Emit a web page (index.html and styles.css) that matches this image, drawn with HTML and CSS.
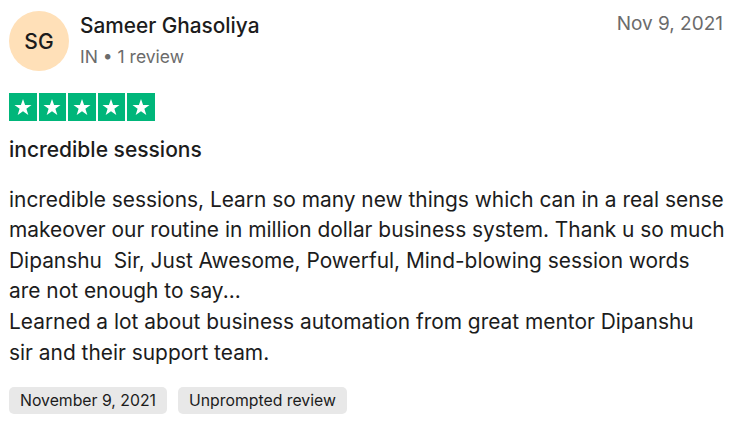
FILE: index.html
```html
<!DOCTYPE html>
<html>
<head>
<meta charset="utf-8">
<link rel="stylesheet" href="styles.css">
</head>
<body>
<article class="review">
  <header class="head">
    <div class="avatar">SG</div>
    <div class="who">
      <div class="name">Sameer Ghasoliya</div>
      <div class="meta">IN • 1 review</div>
    </div>
    <time class="date">Nov 9, 2021</time>
  </header>
  <div class="stars">
    <span class="star"><svg viewBox="0 0 24 24"><path d="M12 3.2l2.3 6.6h7l-5.6 4.1 2.1 6.7L12 16.5l-5.8 4.1 2.1-6.7-5.6-4.1h7z"/></svg></span>
    <span class="star"><svg viewBox="0 0 24 24"><path d="M12 3.2l2.3 6.6h7l-5.6 4.1 2.1 6.7L12 16.5l-5.8 4.1 2.1-6.7-5.6-4.1h7z"/></svg></span>
    <span class="star"><svg viewBox="0 0 24 24"><path d="M12 3.2l2.3 6.6h7l-5.6 4.1 2.1 6.7L12 16.5l-5.8 4.1 2.1-6.7-5.6-4.1h7z"/></svg></span>
    <span class="star"><svg viewBox="0 0 24 24"><path d="M12 3.2l2.3 6.6h7l-5.6 4.1 2.1 6.7L12 16.5l-5.8 4.1 2.1-6.7-5.6-4.1h7z"/></svg></span>
    <span class="star"><svg viewBox="0 0 24 24"><path d="M12 3.2l2.3 6.6h7l-5.6 4.1 2.1 6.7L12 16.5l-5.8 4.1 2.1-6.7-5.6-4.1h7z"/></svg></span>
  </div>
  <h2 class="title">incredible sessions</h2>
  <p class="body">incredible sessions, Learn so many new things which can in a real sense<br>makeover our routine in million dollar business system. Thank u so much<br>Dipanshu&nbsp; Sir, Just Awesome, Powerful, Mind-blowing session words<br>are not enough to say...<br>Learned a lot about business automation from great mentor Dipanshu<br>sir and their support team.</p>
  <div class="chips">
    <span class="chip">November 9, 2021</span>
    <span class="chip">Unprompted review</span>
  </div>
</article>
</body>
</html>
```
FILE: styles.css
```css
html, body {
  margin: 0;
  padding: 0;
  background: #fff;
}
body {
  font-family: Inter, "Noto Sans", sans-serif;
  color: #1c1c1c;
}
.review {
  padding: 11px 0 0 9px;
}
.head {
  display: flex;
  align-items: flex-start;
  padding-right: 7px;
}
.avatar {
  width: 60px;
  height: 60px;
  border-radius: 50%;
  background: #ffe0b8;
  display: flex;
  align-items: center;
  justify-content: center;
  font-size: 21px;
  font-weight: 500;
  color: #1c1c1c;
  flex: none;
}
.who {
  margin-left: 11px;
  flex: 1;
}
.name {
  font-size: 20.8px;
  font-weight: 500;
  line-height: 26px;
  margin-top: 2px;
}
.meta {
  font-size: 17.5px;
  color: #6b6b6b;
  line-height: 26px;
  margin-top: 5px;
}
.date {
  font-size: 19px;
  color: #6b6b6b;
  line-height: 26px;
  margin-top: 0px;
}
.stars {
  display: flex;
  gap: 2px;
  margin-top: 22px;
}
.star {
  width: 27.5px;
  height: 27.5px;
  background: #00b67a;
  display: flex;
  align-items: center;
  justify-content: center;
}
.star svg {
  width: 22px;
  height: 22px;
  fill: #fff;
}
.title {
  font-size: 21px;
  font-weight: 500;
  line-height: 28px;
  margin: 15.5px 0 0;
}
.body {
  font-size: 20.9px;
  line-height: 30.6px;
  margin: 20.7px 0 0;
}
.chips {
  display: flex;
  gap: 11px;
  margin-top: 18.7px;
}
.chip {
  background: #e8e8e8;
  border-radius: 5px;
  font-size: 15.8px;
  line-height: 27px;
  padding: 0 11px;
  color: #1c1c1c;
}
```
